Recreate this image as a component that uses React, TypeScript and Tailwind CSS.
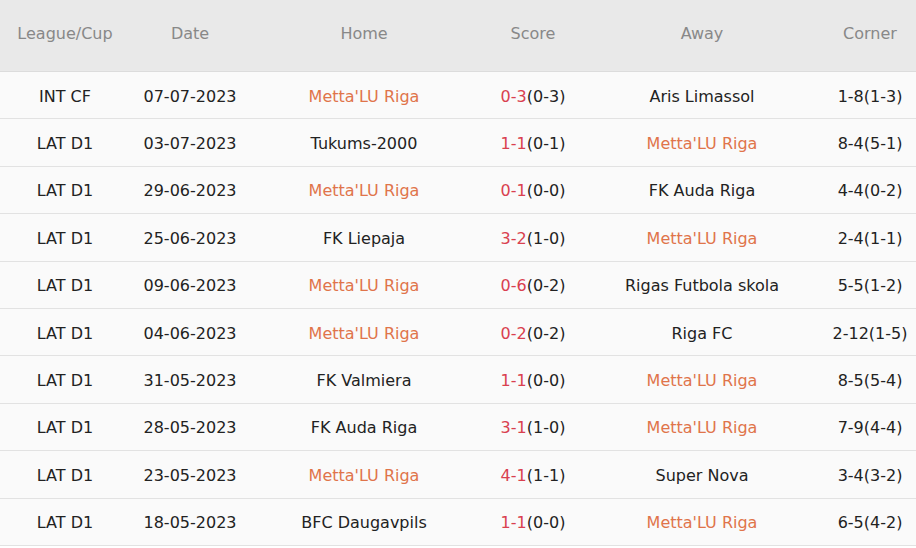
import React from "react";

type Row = {
  league: string;
  date: string;
  home: string;
  score: string;
  half: string;
  away: string;
  corner: string;
};

const TEAM = "Metta'LU Riga";

const rows: Row[] = [
  { league: "INT CF", date: "07-07-2023", home: TEAM, score: "0-3", half: "(0-3)", away: "Aris Limassol", corner: "1-8(1-3)" },
  { league: "LAT D1", date: "03-07-2023", home: "Tukums-2000", score: "1-1", half: "(0-1)", away: TEAM, corner: "8-4(5-1)" },
  { league: "LAT D1", date: "29-06-2023", home: TEAM, score: "0-1", half: "(0-0)", away: "FK Auda Riga", corner: "4-4(0-2)" },
  { league: "LAT D1", date: "25-06-2023", home: "FK Liepaja", score: "3-2", half: "(1-0)", away: TEAM, corner: "2-4(1-1)" },
  { league: "LAT D1", date: "09-06-2023", home: TEAM, score: "0-6", half: "(0-2)", away: "Rigas Futbola skola", corner: "5-5(1-2)" },
  { league: "LAT D1", date: "04-06-2023", home: TEAM, score: "0-2", half: "(0-2)", away: "Riga FC", corner: "2-12(1-5)" },
  { league: "LAT D1", date: "31-05-2023", home: "FK Valmiera", score: "1-1", half: "(0-0)", away: TEAM, corner: "8-5(5-4)" },
  { league: "LAT D1", date: "28-05-2023", home: "FK Auda Riga", score: "3-1", half: "(1-0)", away: TEAM, corner: "7-9(4-4)" },
  { league: "LAT D1", date: "23-05-2023", home: TEAM, score: "4-1", half: "(1-1)", away: "Super Nova", corner: "3-4(3-2)" },
  { league: "LAT D1", date: "18-05-2023", home: "BFC Daugavpils", score: "1-1", half: "(0-0)", away: TEAM, corner: "6-5(4-2)" },
];

function Team({ name }: { name: string }) {
  return <span className={name === TEAM ? "text-[#e0744a]" : "text-[#222]"}>{name}</span>;
}

export default function App() {
  return (
    <div
      className="w-[916px] h-[548px] bg-white overflow-hidden text-[16px]"
      style={{ fontFamily: "'DejaVu Sans', Verdana, sans-serif" }}
    >
      <div className="grid grid-cols-[130px_120px_228px_110px_228px_100px] h-[72px] pb-[3px] bg-[#e9e9e9] text-[#888] items-center border-b border-[#dcdcdc]">
        <div className="text-center">League/Cup</div>
        <div className="text-center">Date</div>
        <div className="text-center">Home</div>
        <div className="text-center">Score</div>
        <div className="text-center">Away</div>
        <div className="text-center pl-2">Corner</div>
      </div>
      {rows.map((r, i) => (
        <div
          key={i}
          className="grid grid-cols-[130px_120px_228px_110px_228px_100px] h-[47.4px] pt-[3px] bg-[#fafafa] text-[#222] items-center border-b border-[#e2e2e2]"
        >
          <div className="text-center">{r.league}</div>
          <div className="text-center">{r.date}</div>
          <div className="text-center"><Team name={r.home} /></div>
          <div className="text-center">
            <span className="text-[#d9404f]">{r.score}</span>
            <span>{r.half}</span>
          </div>
          <div className="text-center"><Team name={r.away} /></div>
          <div className="text-center pl-2">{r.corner}</div>
        </div>
      ))}
    </div>
  );
}
